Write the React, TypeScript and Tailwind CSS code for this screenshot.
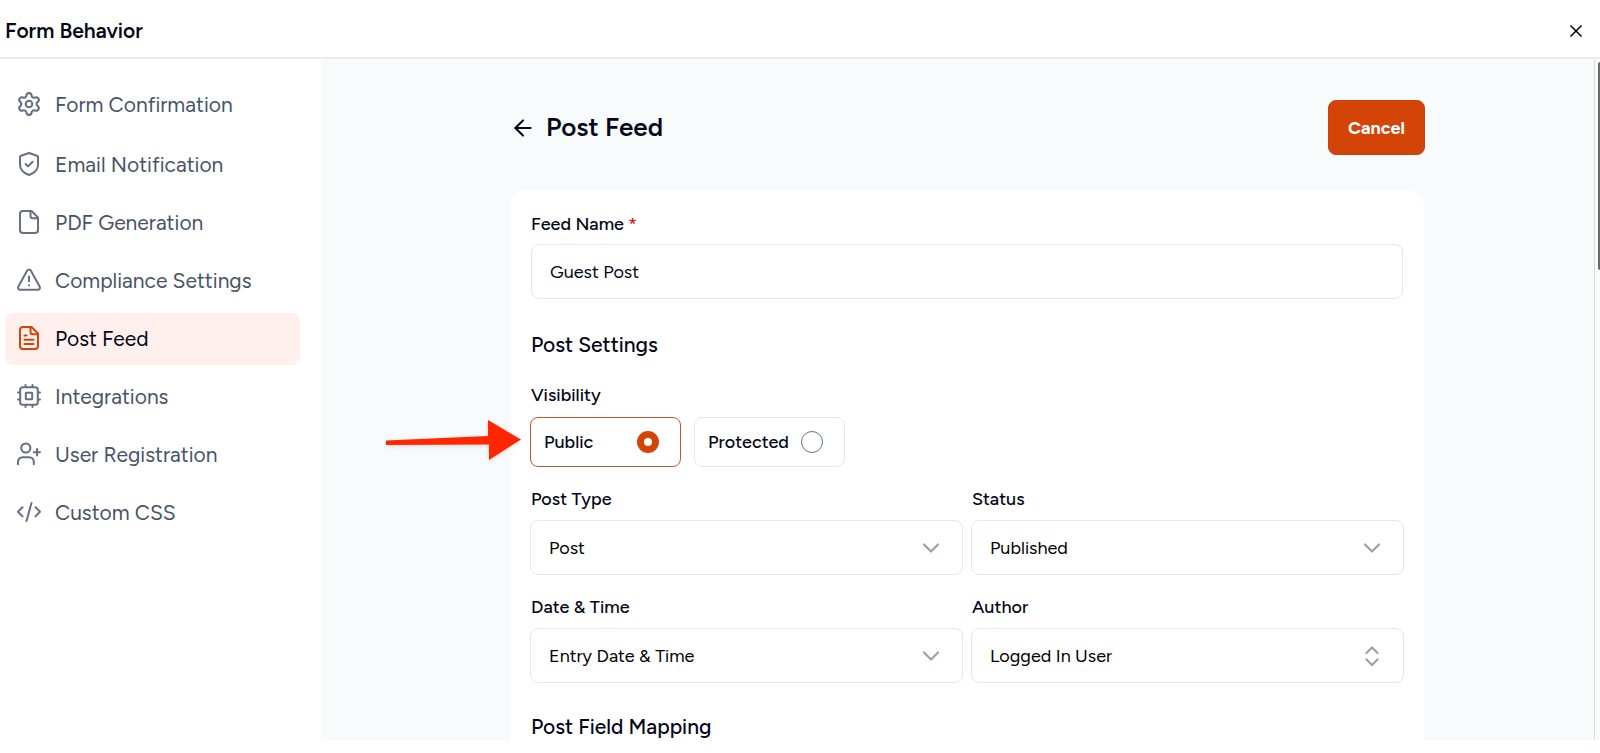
import { useState } from "react";
import type { ReactNode } from "react";
import { ArrowLeft, Settings, X } from "lucide-react";

function Icon({ children }: { children: ReactNode }) {
  return (
    <svg
      className="size-6 shrink-0"
      viewBox="0 0 24 24"
      fill="none"
      stroke="currentColor"
      strokeWidth="2"
      strokeLinecap="round"
      strokeLinejoin="round"
      aria-hidden="true"
    >
      {children}
    </svg>
  );
}

const fileOutline = (
  <>
    <path d="M6 1h8.500L21 7.500V20a3 3 0 0 1-3 3H6a3 3 0 0 1-3-3V4a3 3 0 0 1 3-3Z" />
    <path d="M13.500 1.200V6A2.200 2.200 0 0 0 15.700 8.200H20.800" />
  </>
);

const navItems: { label: string; icon: ReactNode }[] = [
  {
    label: "Form Confirmation",
    icon: (
      <svg className="size-6 shrink-0" viewBox="1 1 22 22" aria-hidden="true">
        <Settings size={24} strokeWidth={1.9} />
      </svg>
    ),
  },
  {
    label: "Email Notification",
    icon: (
      <Icon>
        <path d="M12 1 20 3.800A1.600 1.600 0 0 1 21 5.300V12.500C21 18 16.500 21.500 12 23 7.500 21.500 3 18 3 12.500V5.300A1.600 1.600 0 0 1 4 3.800Z" />
        <path d="m8.600 12 2.400 2.400 4.600-4.600" />
      </Icon>
    ),
  },
  { label: "PDF Generation", icon: <Icon>{fileOutline}</Icon> },
  {
    label: "Compliance Settings",
    icon: (
      <Icon>
        <path d="M10.200 2.600 1.400 18.600A2.100 2.100 0 0 0 3.200 21.800H20.800A2.100 2.100 0 0 0 22.600 18.600L13.800 2.600A2.050 2.050 0 0 0 10.200 2.600Z" />
        <path d="M12 8.500v4.800M12 17.300v.1" />
      </Icon>
    ),
  },
  {
    label: "Post Feed",
    icon: (
      <Icon>
        {fileOutline}
        <path d="M7.500 9.500h2M7.500 13.800h9M7.500 18h9" />
      </Icon>
    ),
  },
  {
    label: "Integrations",
    icon: (
      <Icon>
        <rect x="3.200" y="3.200" width="17.600" height="17.600" rx="2.500" />
        <rect x="8.800" y="8.800" width="6.400" height="6.400" rx="0.500" />
        <path d="M8.500 1v2M15.500 1v2M8.500 21v2M15.500 21v2M1 8.500h2M1 15.500h2M21 8.500h2M21 15.500h2" />
      </Icon>
    ),
  },
  {
    label: "User Registration",
    icon: (
      <Icon>
        <circle cx="8.800" cy="6" r="4.600" />
        <path d="M1 22.200V19.800A4.600 4.600 0 0 1 5.600 15.200H12.200A4.600 4.600 0 0 1 16.800 19.800V22.200" />
        <path d="M20 7v6.600M16.800 10.300H23" />
      </Icon>
    ),
  },
  {
    label: "Custom CSS",
    icon: (
      <Icon>
        <path d="M5.500 7.200 1 11.800l4.500 4.600M18.500 7.200l4.500 4.600-4.500 4.600M14.500 3 9.500 21" />
      </Icon>
    ),
  },
];

function SelectField({
  id,
  label,
  value,
  sorter = false,
}: {
  id: string;
  label: string;
  value: string;
  sorter?: boolean;
}) {
  return (
    <div className="min-w-0">
      <label htmlFor={id} className="block pl-px text-lg leading-7 font-medium">
        {label}
      </label>
      <div className="relative mt-[7px]">
        <select
          id={id}
          className="block h-[55px] w-full appearance-none rounded-lg border border-gray-200 bg-white px-[18px] text-lg text-black"
        >
          <option>{value}</option>
        </select>
        <svg
          className="pointer-events-none absolute inset-y-0 right-5 my-auto size-6 text-gray-400"
          viewBox="0 0 24 24"
          fill="none"
          stroke="currentColor"
          strokeWidth="2.200"
          strokeLinecap="round"
          strokeLinejoin="round"
          aria-hidden="true"
        >
          {sorter ? (
            <path d="m6.500 9 5.500-5.500L17.500 9M6.500 15.500 12 21l5.500-5.500" />
          ) : (
            <path d="m5 8.500 7 7 7-7" />
          )}
        </svg>
      </div>
    </div>
  );
}

function VisibilityOption({
  label,
  checked,
  onSelect,
}: {
  label: string;
  checked: boolean;
  onSelect: () => void;
}) {
  return (
    <label
      className={
        checked
          ? "flex h-[50px] w-[151px] items-center justify-between rounded-lg border border-[#c9562a] pr-[21px] pl-[13px] text-lg font-medium"
          : "flex h-[50px] w-[151px] items-center justify-between rounded-lg border border-gray-200 pr-[21px] pl-[13px] text-lg font-medium"
      }
    >
      {label}
      <input
        type="radio"
        name="visibility"
        checked={checked}
        onChange={onSelect}
        className="size-[22px] appearance-none rounded-full border border-gray-500 bg-white checked:border-[7px] checked:border-[#d54407]"
      />
    </label>
  );
}

export default function App() {
  const [active, setActive] = useState("Post Feed");
  const [visibility, setVisibility] = useState("Public");

  return (
    <div className="flex h-screen flex-col bg-white pb-[13px] font-['Figtree','Lato',sans-serif] text-[#020617]">
      <header className="flex h-[59px] shrink-0 items-center justify-between border-b-2 border-[#e9ebf0] pt-1 pr-3.5 pl-[5px]">
        <h1 className="text-[21px] font-semibold">Form Behavior</h1>
        <button type="button" aria-label="Close">
          <X size={20} strokeWidth={2} />
        </button>
      </header>

      <div className="flex min-h-0 flex-1">
        <nav className="flex w-[321px] shrink-0 flex-col gap-1.5 pt-5 pr-[21px] pl-[5px]">
          {navItems.map((item, i) => (
            <button
              key={item.label}
              type="button"
              onClick={() => setActive(item.label)}
              className={
                (active === item.label
                  ? "bg-[#fff0ed] text-[#020617]"
                  : "text-[#475467]") +
                (i === 0 ? " mb-0.5" : "") +
                " flex h-[52px] shrink-0 items-center gap-3.5 rounded-lg pl-3 text-left text-[21px]"
              }
            >
              <span
                className={
                  active === item.label
                    ? "pb-0.5 text-[#d54407]"
                    : "pb-0.5 text-[#667085]"
                }
              >
                {item.icon}
              </span>
              {item.label}
            </button>
          ))}
        </nav>

        <main className="min-w-0 flex-1 overflow-hidden bg-[#f7fbfc] pl-[19px]">
          <div className="mx-auto max-w-[914px]">
            <div className="-mr-px flex items-center justify-between pt-[41px] pb-[35px]">
              <div className="flex items-center gap-2.5">
                <button type="button" aria-label="Back">
                  <ArrowLeft size={26} strokeWidth={1.9} />
                </button>
                <h2 className="text-[26px] font-semibold">Post Feed</h2>
              </div>
              <button
                type="button"
                className="h-[55px] rounded-lg border border-[#c24510] bg-[#d54407] px-[19px] text-lg font-bold text-white"
              >
                Cancel
              </button>
            </div>

            <form className="rounded-2xl bg-white px-[21px] pt-5 pb-8">
              <label
                htmlFor="feed-name"
                className="block text-lg leading-7 font-medium"
              >
                Feed Name <span className="text-red-600">*</span>
              </label>
              <input
                id="feed-name"
                type="text"
                defaultValue="Guest Post"
                className="mt-1.5 block h-[55px] w-full rounded-lg border border-gray-200 px-[18px] text-lg"
              />

              <h3 className="mt-8 text-[21px] leading-7 font-medium">
                Post Settings
              </h3>

              <fieldset className="mt-[22px]">
                <legend className="text-lg leading-7 font-medium">
                  Visibility
                </legend>
                <div className="relative mt-2 -ml-px flex gap-[13px]">
                  <VisibilityOption
                    label="Public"
                    checked={visibility === "Public"}
                    onSelect={() => setVisibility("Public")}
                  />
                  <VisibilityOption
                    label="Protected"
                    checked={visibility === "Protected"}
                    onSelect={() => setVisibility("Protected")}
                  />
                  <svg
                    className="pointer-events-none absolute top-0 right-full mr-2 h-12 w-[138px] drop-shadow-sm"
                    viewBox="0 0 138 48"
                    aria-hidden="true"
                  >
                    <path
                      d="M2 23.500 104 19V3L137 22.500 105 43V27.500L2 28Z"
                      fill="#ff2600"
                    />
                  </svg>
                </div>
              </fieldset>

              <div className="-mx-px mt-[18px] grid grid-cols-2 gap-x-2 gap-y-[18px]">
                <SelectField id="post-type" label="Post Type" value="Post" />
                <SelectField id="status" label="Status" value="Published" />
                <SelectField
                  id="date-time"
                  label="Date & Time"
                  value="Entry Date & Time"
                />
                <SelectField
                  id="author"
                  label="Author"
                  value="Logged In User"
                  sorter
                />
              </div>

              <h3 className="mt-8 text-[21px] leading-6 font-medium">
                Post Field Mapping
              </h3>
            </form>
          </div>
        </main>

        <div className="flex w-1.5 shrink-0 justify-end border-l border-[#dcdcdc] bg-[#fafafa] pt-[3px]">
          <div className="h-52 w-0.5 rounded-l-sm bg-[#6b6b6b]" />
        </div>
      </div>
    </div>
  );
}
